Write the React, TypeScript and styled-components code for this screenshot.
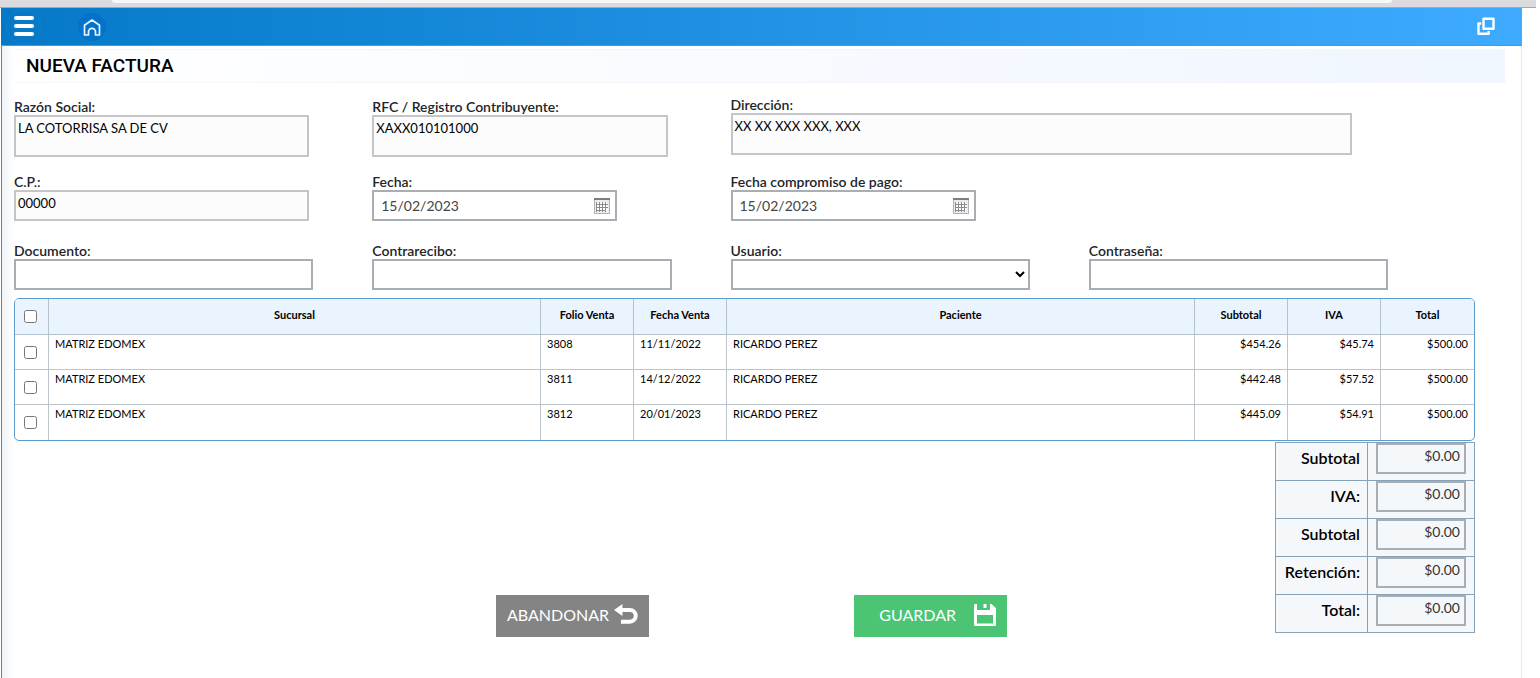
import React from "react";
import styled, { createGlobalStyle } from "styled-components";

const GlobalStyle = createGlobalStyle`
  *, *::before, *::after { box-sizing: border-box; }
  html, body, #root { height: 100%; }
  body {
    margin: 0;
    background: #fff;
    color: #000;
    font-family: Lato, "Liberation Sans", sans-serif;
    font-size: 13px;
  }
  button, input, select, textarea { font: inherit; color: inherit; margin: 0; }
`;

const Page = styled.div`
  display: flex;
  flex-direction: column;
  min-height: 100%;
  padding-right: 4px;
`;

const BrowserStrip = styled.div`
  height: 8px;
  padding: 0 144px 0 112px;
  background: #dadadf;
  border-bottom: 1px solid #a9a9ad;
`;

const AddressBar = styled.div`
  height: 3px;
  background: #f6f7f9;
  border-radius: 0 0 8px 8px;
`;

const Shell = styled.div`
  flex: 1;
  display: flex;
  flex-direction: column;
  margin: 0 14px 0 1px;
`;

const TopBar = styled.header`
  display: flex;
  align-items: center;
  height: 38px;
  padding: 0 26px 0 5px;
  background: linear-gradient(90deg, #0579c8 0%, #3eabff 100%);
  border-bottom: 1px solid #6f8ea8;
`;

const BarButton = styled.button`
  display: flex;
  align-items: center;
  justify-content: center;
  width: 36px;
  height: 36px;
  padding: 0;
  border: 1px solid transparent;
  border-radius: 50%;
  background: transparent;
  color: #fff;
`;

const MenuButton = styled(BarButton)`
  border-color: #1180cb;
`;

const HomeButton = styled(BarButton)`
  width: 28px;
  height: 28px;
  margin-left: 36px;
  background: #0472ca;
`;

const WindowButton = styled(BarButton)`
  width: 20px;
  margin-left: auto;
`;

const Main = styled.main`
  flex: 1;
  padding: 3px 16px 16px 12px;
  border-left: 1px solid #75808a;
  border-right: 1px solid #e8e9ec;
  background: linear-gradient(90deg, #eff2f5 0, #fff 12px);
`;

const Title = styled.h1`
  margin: 0 0 11px;
  padding: 0 12px;
  border: 1px solid #f4f6fa;
  border-width: 1px 0;
  background: linear-gradient(90deg, #fff, #f0f6ff);
  font-family: Roboto, sans-serif;
  font-size: 19px;
  font-weight: 500;
  line-height: 32px;
`;

const Form = styled.form`
  padding-right: 30px;
`;

const FieldRow = styled.div`
  display: grid;
  grid-template-columns: repeat(4, 1fr);
  align-items: end;
  padding-right: 28px;
  margin-bottom: 19px;
`;

const ClientRow = styled(FieldRow)`
  height: 63px;
  margin-bottom: 14px;
`;

const LastRow = styled(FieldRow)`
  margin-bottom: 8px;
`;

const Field = styled.div`
  display: flex;
  flex-direction: column;
`;

const WideField = styled(Field)`
  grid-column: span 2;
  align-self: start;
`;

const Label = styled.label`
  padding-top: 3px;
  color: #212529;
  font-size: 14px;
  font-weight: 600;
  line-height: 16px;
`;

const ReadBox = styled.textarea<{ $tall?: boolean; $inset?: number }>`
  display: block;
  width: calc(100% - ${(p) => p.$inset ?? 63}px);
  height: ${(p) => (p.$tall ? 42 : 31)}px;
  padding: 2px;
  border: 2px solid #c4c5c8;
  background: #fcfcfd;
  line-height: 18px;
  overflow: hidden;
  resize: none;
  outline: none;
`;

const TextInput = styled.input`
  width: calc(100% - 59px);
  height: 31px;
  padding: 0 8px;
  border: 2px solid #a9aeb4;
  background: #fff;
`;

const Select = styled.select`
  width: calc(100% - 59px);
  height: 31px;
  padding: 0;
  border: 2px solid #a9aeb4;
  border-radius: 0;
  background: #fff;
`;

const DateBox = styled.div`
  display: flex;
  align-items: center;
  width: 245px;
  height: 31px;
  padding: 0 5px 0 7px;
  border: 2px solid #a9aeb4;
  background: #fff;
`;

const DateInput = styled.input`
  flex: 1;
  min-width: 0;
  padding: 0;
  border: 0;
  outline: none;
  background: transparent;
  color: #444;
  font-size: 14px;
`;

const CalendarButton = styled.button`
  display: flex;
  padding: 0;
  border: 0;
  background: none;
`;

const Sales = styled.table`
  width: 100%;
  table-layout: fixed;
  border: 1px solid #5b9bcd;
  border-radius: 5px;
  border-collapse: separate;
  border-spacing: 0;
  overflow: hidden;
  line-height: 14px;
`;

const HeadCell = styled.th`
  height: 36px;
  padding: 0 6px 4px;
  border-right: 1px solid #b4c0cc;
  border-bottom: 1px solid #b4c0cc;
  background: #e9f4ff;
  font-size: 11px;
  font-weight: 700;
  text-align: center;
  &:last-child { border-right: 0; }
`;

const Cell = styled.td<{ $right?: boolean }>`
  height: 35px;
  padding: 2px 6px;
  border-right: 1px solid #bcc4cc;
  border-bottom: 1px solid #bcc4cc;
  font-size: 11px;
  text-align: ${(p) => (p.$right ? "right" : "left")};
  vertical-align: top;
  &:last-child { border-right: 0; }
  tr:last-child > & { border-bottom: 0; }
`;

const Check = styled.input`
  display: block;
  width: 13px;
  height: 13px;
  margin: 9px 0 0 3px;
`;

const HeadCheck = styled(Check)`
  margin-top: 4px;
`;

const Footer = styled.div`
  display: grid;
  grid-template-columns: 1fr auto 1fr;
  align-items: end;
  padding-left: 14px;
`;

const Actions = styled.div`
  grid-column: 2;
  display: flex;
  gap: 205px;
  margin-bottom: -4px;
`;

const ActionButton = styled.button<{ $tone: string; $gap: number }>`
  display: flex;
  align-items: center;
  justify-content: flex-end;
  gap: ${(p) => p.$gap}px;
  width: 153px;
  height: 42px;
  padding: 0 11px 3px;
  border: 0;
  background: ${(p) => p.$tone};
  color: #fff;
  font-size: 16px;
`;

const Totals = styled.table`
  justify-self: end;
  width: 200px;
  margin-top: 1px;
  table-layout: fixed;
  border: 1px solid #6a9cc4;
  border-collapse: collapse;
  background: #f5f8fb;
`;

const TotalLabel = styled.th`
  width: 92px;
  height: 38px;
  padding: 0 7px 8px 0;
  border: 1px solid #86a3b9;
  font-size: 16px;
  font-weight: 600;
  text-align: right;
  white-space: nowrap;
`;

const TotalCell = styled.td`
  padding: 0 8px 6px;
  border: 1px solid #86a3b9;
`;

const TotalInput = styled.input`
  display: block;
  width: 100%;
  height: 31px;
  padding: 0 4px 6px;
  border: 2px solid #a9aeb4;
  background: #f5f8fb;
  color: #333;
  font-size: 14px;
  text-align: right;
`;

const MenuIcon = () => (
  <svg width="22" height="22" viewBox="0 0 22 22" fill="none" stroke="#fff" strokeWidth="4" strokeLinecap="round" aria-hidden="true">
    <path d="M3 2h16M3 10h16M3 18h16" />
  </svg>
);

const HomeIcon = () => (
  <svg width="18" height="18" viewBox="0 0 18 18" fill="none" stroke="#e6f6ff" strokeWidth="1.7" strokeLinejoin="round" aria-hidden="true">
    <path d="M1.500 7.200 9 2l7.500 5.200v9.800h-4v-3.200a3.400 3.400 0 0 0-7 0v3.200h-4z" />
  </svg>
);

const WindowIcon = () => (
  <svg width="18" height="20" viewBox="0 0 18 20" fill="none" stroke="#fff" strokeWidth="2.400" strokeLinejoin="round" aria-hidden="true">
    <path d="M6.500 1.700h10v10h-10z" />
    <path d="M4.300 6.500H1.500v10.200h10.200v-2.700" />
  </svg>
);

const CalendarIcon = () => (
  <svg width="16" height="16" viewBox="0 0 16 16" aria-hidden="true">
    <path d="M0 0h16v16H0z" fill="#b4b4b4" />
    <path d="M0 0h16v2H0z" fill="#7d7d7d" />
    <path d="M1 2h14v13H1z" fill="#ececec" />
    <path d="M2.500 4.500h11v9h-11z" fill="#fff" />
    <path d="M2.500 4v10M5.500 4v10M8.500 4v10M11.500 4v10M2 6.500h12M2 9.500h12M2 12.500h10" stroke="#8c8c8c" strokeWidth="1" />
  </svg>
);

const UndoIcon = () => (
  <svg width="24" height="22" viewBox="0 0 24 22" aria-hidden="true">
    <path d="M0 6 8.500 0v12z" fill="#fff" />
    <path d="M7 6h9a5.800 5.800 0 0 1 0 11.700H7" fill="none" stroke="#fff" strokeWidth="4" />
  </svg>
);

const SaveIcon = () => (
  <svg width="22" height="22" viewBox="0 0 22 22" aria-hidden="true">
    <path
      fill="#fff"
      fillRule="evenodd"
      d="M0 1.500C0 .6.6 0 1.500 0H3v6h13V0h1.500L22 4.200v16.300c0 .9-.6 1.500-1.500 1.500h-19C.6 22 0 21.400 0 20.500zM3 11v8.500h16V11z"
    />
    <path fill="#fff" d="M9.500 0h3v4h-3z" />
  </svg>
);

const columns = [
  { name: "Sucursal" },
  { name: "Folio Venta", width: 93 },
  { name: "Fecha Venta", width: 93 },
  { name: "Paciente" },
  { name: "Subtotal", width: 93, right: true },
  { name: "IVA", width: 93, right: true },
  { name: "Total", width: 93, right: true },
];

const sales = [
  ["MATRIZ EDOMEX", "3808", "11/11/2022", "RICARDO PEREZ", "$454.26", "$45.74", "$500.00"],
  ["MATRIZ EDOMEX", "3811", "14/12/2022", "RICARDO PEREZ", "$442.48", "$57.52", "$500.00"],
  ["MATRIZ EDOMEX", "3812", "20/01/2023", "RICARDO PEREZ", "$445.09", "$54.91", "$500.00"],
];

const totals = ["Subtotal", "IVA:", "Subtotal", "Retención:", "Total:"];

const ColWidths = styled.colgroup`
  col.check { width: 34px; }
  col.branch { width: 492px; }
  col.narrow { width: 93px; }
`;

function DateField({ id, label }: { id: string; label: string }) {
  return (
    <Field>
      <Label htmlFor={id}>{label}</Label>
      <DateBox>
        <DateInput id={id} defaultValue="15/02/2023" />
        <CalendarButton type="button" aria-label="Abrir calendario">
          <CalendarIcon />
        </CalendarButton>
      </DateBox>
    </Field>
  );
}

export default function App() {
  return (
    <Page>
      <GlobalStyle />
      <BrowserStrip>
        <AddressBar />
      </BrowserStrip>
      <Shell>
        <TopBar>
          <MenuButton type="button" aria-label="Menú"><MenuIcon /></MenuButton>
          <HomeButton type="button" aria-label="Inicio"><HomeIcon /></HomeButton>
          <WindowButton type="button" aria-label="Ventanas"><WindowIcon /></WindowButton>
        </TopBar>
        <Main>
          <Title>NUEVA FACTURA</Title>
          <Form onSubmit={(e) => e.preventDefault()}>
            <ClientRow>
              <Field>
                <Label htmlFor="razon">Razón Social:</Label>
                <ReadBox id="razon" $tall readOnly value="LA COTORRISA SA DE CV" />
              </Field>
              <Field>
                <Label htmlFor="rfc">RFC / Registro Contribuyente:</Label>
                <ReadBox id="rfc" $tall readOnly value="XAXX010101000" />
              </Field>
              <WideField>
                <Label htmlFor="direccion">Dirección:</Label>
                <ReadBox id="direccion" $tall $inset={95} readOnly value="XX XX XXX XXX, XXX" />
              </WideField>
            </ClientRow>
            <FieldRow>
              <Field>
                <Label htmlFor="cp">C.P.:</Label>
                <ReadBox id="cp" readOnly value="00000" />
              </Field>
              <DateField id="fecha" label="Fecha:" />
              <DateField id="compromiso" label="Fecha compromiso de pago:" />
            </FieldRow>
            <LastRow>
              <Field>
                <Label htmlFor="documento">Documento:</Label>
                <TextInput id="documento" />
              </Field>
              <Field>
                <Label htmlFor="contrarecibo">Contrarecibo:</Label>
                <TextInput id="contrarecibo" />
              </Field>
              <Field>
                <Label htmlFor="usuario">Usuario:</Label>
                <Select id="usuario" defaultValue=""><option value="" /></Select>
              </Field>
              <Field>
                <Label htmlFor="contrasena">Contraseña:</Label>
                <TextInput id="contrasena" type="password" />
              </Field>
            </LastRow>
            <Sales>
              <ColWidths>
                <col className="check" />
                {columns.map((c) => (
                  <col key={c.name} className={c.width ? "narrow" : c.name === "Sucursal" ? "branch" : undefined} />
                ))}
              </ColWidths>
              <thead>
                <tr>
                  <HeadCell><HeadCheck type="checkbox" aria-label="Seleccionar todo" /></HeadCell>
                  {columns.map((c) => <HeadCell key={c.name} scope="col">{c.name}</HeadCell>)}
                </tr>
              </thead>
              <tbody>
                {sales.map((row) => (
                  <tr key={row[1]}>
                    <Cell><Check type="checkbox" aria-label={`Seleccionar venta ${row[1]}`} /></Cell>
                    {row.map((value, i) => <Cell key={columns[i].name} $right={columns[i].right}>{value}</Cell>)}
                  </tr>
                ))}
              </tbody>
            </Sales>
            <Footer>
              <Actions>
                <ActionButton type="button" $tone="#848484" $gap={5}>ABANDONAR<UndoIcon /></ActionButton>
                <ActionButton type="submit" $tone="#4bc474" $gap={18}>GUARDAR<SaveIcon /></ActionButton>
              </Actions>
              <Totals>
                <tbody>
                  {totals.map((name, i) => (
                    <tr key={i}>
                      <TotalLabel scope="row"><label htmlFor={`total-${i}`}>{name}</label></TotalLabel>
                      <TotalCell><TotalInput id={`total-${i}`} readOnly value="$0.00" /></TotalCell>
                    </tr>
                  ))}
                </tbody>
              </Totals>
            </Footer>
          </Form>
        </Main>
      </Shell>
    </Page>
  );
}
